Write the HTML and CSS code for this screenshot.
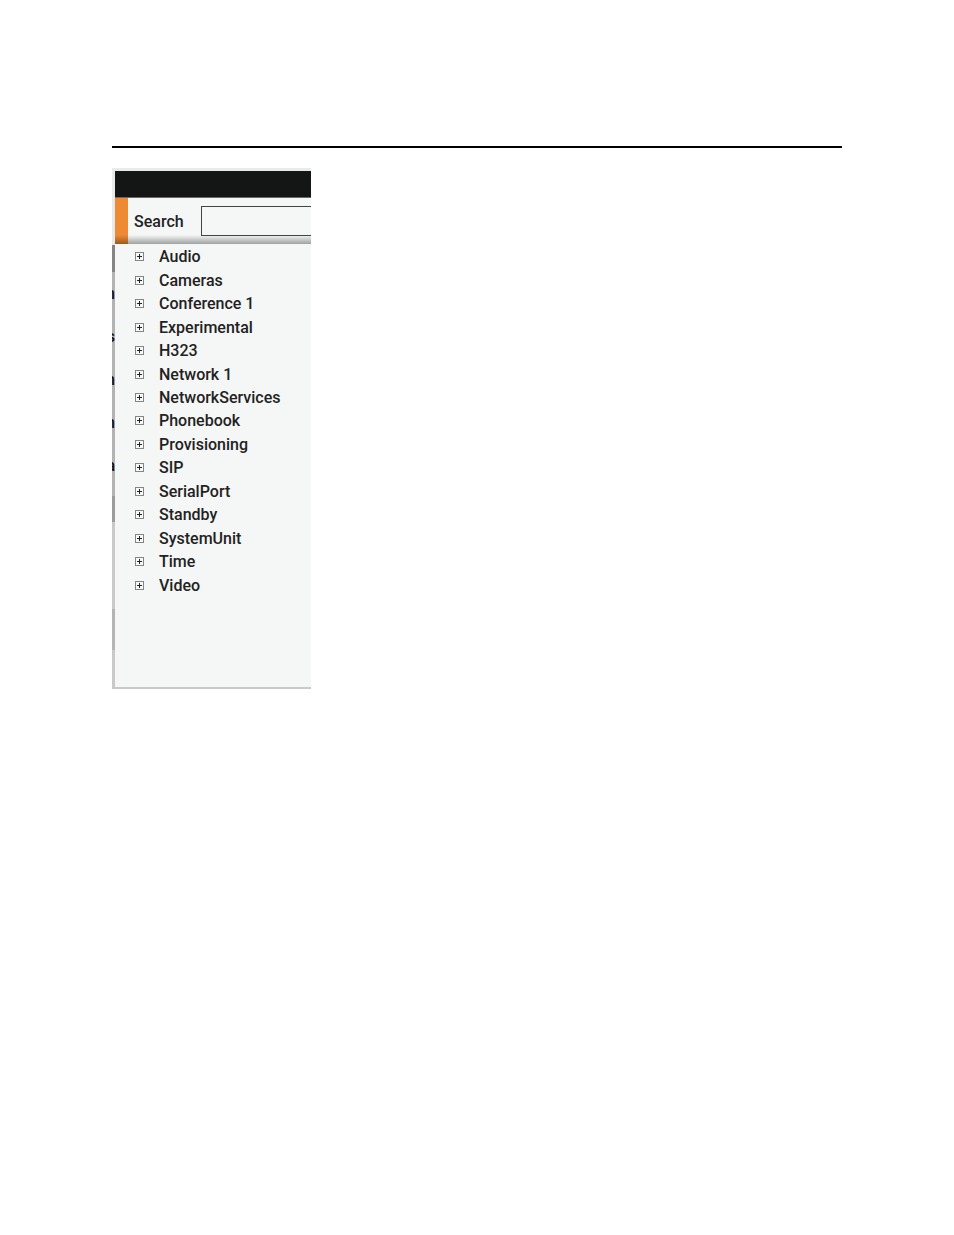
FILE: index.html
```html
<!DOCTYPE html>
<html lang="en">
<head>
  <meta charset="UTF-8">
  <meta name="viewport" content="width=device-width, initial-scale=1.0">
  <title>Configuration</title>
  <link rel="stylesheet" href="styles.css">
</head>
<body>
  <hr class="page-rule">

  <div class="window">
    <!-- Sliver of the page behind the panel -->
    <div class="backdrop" aria-hidden="true">
      <span>n</span>
      <span>s</span>
      <span>n</span>
      <span>n</span>
      <span>a</span>
    </div>

    <main class="panel">
      <div class="title-bar"></div>
      <form class="search-bar">
        <label for="search">Search</label>
        <input type="text" id="search">
      </form>
      <ul class="tree" id="tree"></ul>
    </main>
  </div>

  <script>
    const sections = [
      'Audio', 'Cameras', 'Conference 1', 'Experimental', 'H323',
      'Network 1', 'NetworkServices', 'Phonebook', 'Provisioning', 'SIP',
      'SerialPort', 'Standby', 'SystemUnit', 'Time', 'Video'
    ];

    const tree = document.getElementById('tree');

    sections.forEach(name => {
      const item = document.createElement('li');
      item.innerHTML = `
        <button type="button" class="tree-item">
          <svg class="expand-icon" viewBox="0 0 9 9" aria-hidden="true">
            <rect x="0.5" y="0.5" width="8" height="8" fill="#f7f8f8" stroke="#858585"/>
            <path d="M2 4.5h5M4.5 2v5" stroke="#222"/>
          </svg>
          <span>${name}</span>
        </button>
      `;
      tree.appendChild(item);
    });
  </script>
</body>
</html>
```

FILE: styles.css
```css
* {
  box-sizing: border-box;
}

body {
  margin: 0;
  padding: 146px 112px 0;
  background-color: #fff;
  color: #222;
  font-family: Roboto, 'Liberation Sans', sans-serif;
  font-size: 16px;
  font-weight: 500;
}

.page-rule {
  height: 2px;
  margin: 0 0 20px;
  border: none;
  background-color: #000;
}

.window {
  display: flex;
  width: 199px;
  max-width: 100%;
  overflow: hidden;
}

.backdrop {
  display: flex;
  flex-direction: column;
  align-items: flex-end;
  width: 3px;
  padding-top: 104px;
  overflow: hidden;
  color: #111;
  line-height: 43px;
  background: linear-gradient(
    #e8ebea 77px,
    #858585 77px, #858585 104px,
    #b3b3b3 104px, #b3b3b3 328px,
    #9c9c9c 328px, #9c9c9c 354px,
    #c9c9c9 354px, #c9c9c9 441px,
    #b5b5b5 441px, #b5b5b5 482px,
    #c9c9c9 482px
  );
}

.panel {
  flex: 1;
  min-width: 0;
  border-top: 3px solid #e8ebea;
  border-bottom: 2px solid #c9c9c9;
  background-color: #f5f6f6;
}

.title-bar {
  height: 27px;
  background-color: #141615;
  border-bottom: 1px solid #6d6668;
}

/* Search */
.search-bar {
  display: flex;
  align-items: center;
  gap: 17px;
  height: 46px;
  padding-left: 19px;
  background:
    linear-gradient(transparent 37px, rgba(0, 0, 0, 0.35)),
    linear-gradient(to right, #ee8a33 13px, transparent 13px);
}

.search-bar input {
  flex: 1 0 200px;
  height: 30px;
  padding: 0 8px;
  border: 1px solid #444;
  border-radius: 0;
  background-color: #f5f6f6;
  color: inherit;
  font: inherit;
}

/* Tree */
.tree {
  display: grid;
  grid-auto-rows: 1fr;
  min-height: 443px;
  margin: 0;
  padding: 1px 0 90px 20px;
  list-style: none;
}

.tree-item {
  display: flex;
  align-items: center;
  gap: 15px;
  width: 100%;
  height: 100%;
  padding: 0;
  border: none;
  background: none;
  color: inherit;
  font: inherit;
  text-align: left;
  cursor: pointer;
}

.expand-icon {
  flex: none;
  width: 9px;
  height: 9px;
}
```
